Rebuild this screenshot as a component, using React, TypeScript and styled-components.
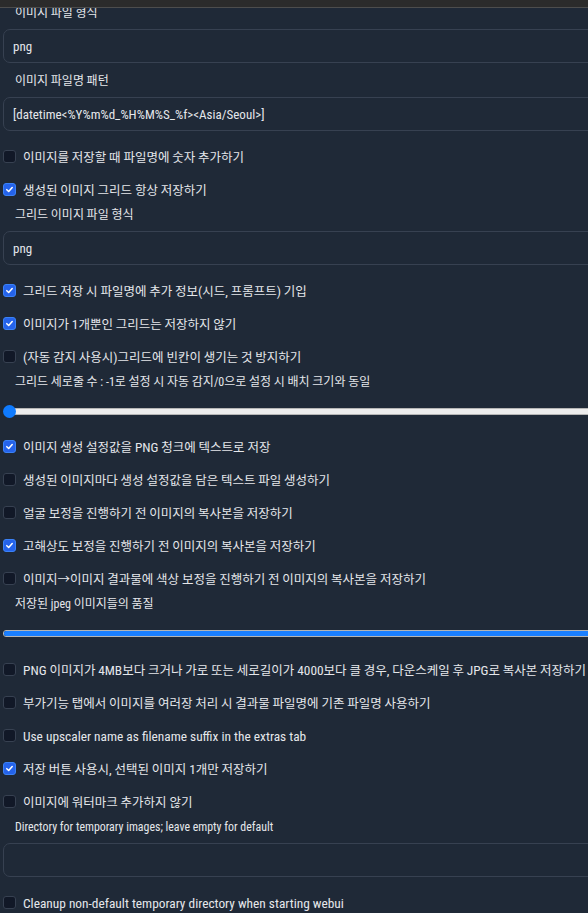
import React from "react";
import styled, { createGlobalStyle } from "styled-components";

const Global = createGlobalStyle`
  html, body { margin: 0; padding: 0; background: #1f2937; overflow: hidden; }
  body { font-family: "Noto Sans CJK KR", "Noto Sans", sans-serif; color: #e5e7eb; }
  * { box-sizing: border-box; }
`;

const Latin = styled.span<{ $scale: number }>`
  font-family: "Roboto", "Noto Sans CJK KR", sans-serif;
  font-stretch: 85%;
  font-size: ${(p) => p.$scale}em;
`;

const T = ({ text, scale = 1.07 }: { text: string; scale?: number }) => (
  <>
    {text
      .split(/([\x21-\x7e](?:[\x20-\x7e]*[\x21-\x7e])?)/)
      .map((s, i) =>
        i % 2 ? (
          <Latin key={i} $scale={scale}>
            {s}
          </Latin>
        ) : (
          <React.Fragment key={i}>{s}</React.Fragment>
        )
      )}
  </>
);

const TopBar = styled.div`
  position: fixed;
  top: 0; left: 0; right: 0;
  height: 8px;
  background: #2b2b2b;
  border-bottom: 1px solid #4d4d4d;
  z-index: 5;
`;

const Page = styled.div`
  width: 640px;
  padding: 4px 0 0 3px;
  display: flex;
  flex-direction: column;
`;

const Field = styled.div`
  display: flex;
  flex-direction: column;
  padding-bottom: 9px;
`;

const FieldLabel = styled.div<{ $mb?: number }>`
  height: 16px;
  line-height: 16px;
  padding-left: 12px;
  font-size: 12px;
  color: #e5e7eb;
  white-space: nowrap;
  margin-bottom: ${(p) => p.$mb ?? 9}px;
`;

const TextBox = styled.div`
  height: 34px;
  border: 1px solid #374151;
  border-radius: 7px;
  background: #1f2937;
  padding: 0 9px;
  display: flex;
  align-items: center;
  font-size: 12.5px;
  color: #e5e7eb;
  white-space: nowrap;
`;

const CheckRow = styled.label`
  height: 33px;
  display: flex;
  align-items: center;
  gap: 7px;
  font-size: 12.5px;
  color: #e5e7eb;
  white-space: nowrap;
`;

const Box = styled.span<{ $on: boolean }>`
  width: 13px;
  height: 13px;
  flex: none;
  border-radius: 3px;
  border: 1px solid ${(p) => (p.$on ? "#3b82f6" : "#374151")};
  background: ${(p) => (p.$on ? "#2563eb" : "#111827")};
  display: flex;
  align-items: center;
  justify-content: center;
`;

const SliderField = styled.div<{ $pb: number }>`
  display: flex;
  flex-direction: column;
  padding-bottom: ${(p) => p.$pb}px;
`;

const SliderArea = styled.div`
  position: relative;
  height: 20px;
  margin-top: 12px;
  display: flex;
  align-items: center;
`;

const Track = styled.div<{ $inset: number }>`
  position: relative;
  flex: 1;
  height: 7px;
  margin-left: ${(p) => p.$inset}px;
  border-radius: 3px;
  background: #ececec;
  border: 1px solid #b5b5b5;
  overflow: hidden;
`;

const Fill = styled.div`
  height: 100%;
  background: #1a7fff;
`;

const Thumb = styled.span`
  position: absolute;
  left: 0;
  top: 50%;
  width: 13px;
  height: 13px;
  margin-top: -6.5px;
  border-radius: 50%;
  background: #0f7bff;
`;

const Check = () => (
  <svg width="9" height="9" viewBox="0 0 10 10">
    <path d="M2 5.2 L4.1 7.2 L8 2.8" fill="none" stroke="#fff" strokeWidth="1.7" strokeLinecap="round" strokeLinejoin="round" />
  </svg>
);

const CB = ({ on, text }: { on?: boolean; text: string }) => (
  <CheckRow>
    <Box $on={!!on}>{on && <Check />}</Box>
    <span>
      <T text={text} />
    </span>
  </CheckRow>
);

const TF = ({ label, value }: { label: string; value: string }) => (
  <Field>
    <FieldLabel>
      <T text={label} scale={0.99} />
    </FieldLabel>
    <TextBox>
      <T text={value} scale={1.04} />
    </TextBox>
  </Field>
);

const Slider = ({ label, pct, thumb, pb }: { label: string; pct: number; thumb: boolean; pb: number }) => (
  <SliderField $pb={pb}>
    <FieldLabel $mb={0}>
      <T text={label} scale={1} />
    </FieldLabel>
    <SliderArea>
      <Track $inset={thumb ? 6 : 0}>
        <Fill style={{ width: `${pct}%` }} />
      </Track>
      {thumb && <Thumb />}
    </SliderArea>
  </SliderField>
);

export default function App() {
  return (
    <>
      <Global />
      <TopBar />
      <Page>
        <TF label="이미지 파일 형식" value="png" />
        <TF label="이미지 파일명 패턴" value="[datetime<%Y%m%d_%H%M%S_%f><Asia/Seoul>]" />
        <CB text="이미지를 저장할 때 파일명에 숫자 추가하기" />
        <CB on text="생성된 이미지 그리드 항상 저장하기" />
        <TF label="그리드 이미지 파일 형식" value="png" />
        <CB on text="그리드 저장 시 파일명에 추가 정보(시드, 프롬프트) 기입" />
        <CB on text="이미지가 1개뿐인 그리드는 저장하지 않기" />
        <CB text="(자동 감지 사용시)그리드에 빈칸이 생기는 것 방지하기" />
        <Slider label="그리드 세로줄 수 : -1로 설정 시 자동 감지/0으로 설정 시 배치 크기와 동일" pct={0} thumb pb={9} />
        <CB on text="이미지 생성 설정값을 PNG 청크에 텍스트로 저장" />
        <CB text="생성된 이미지마다 생성 설정값을 담은 텍스트 파일 생성하기" />
        <CB text="얼굴 보정을 진행하기 전 이미지의 복사본을 저장하기" />
        <CB on text="고해상도 보정을 진행하기 전 이미지의 복사본을 저장하기" />
        <CB text="이미지→이미지 결과물에 색상 보정을 진행하기 전 이미지의 복사본을 저장하기" />
        <Slider label="저장된 jpeg 이미지들의 품질" pct={100} thumb={false} pb={10} />
        <CB text="PNG 이미지가 4MB보다 크거나 가로 또는 세로길이가 4000보다 클 경우, 다운스케일 후 JPG로 복사본 저장하기" />
        <CB text="부가기능 탭에서 이미지를 여러장 처리 시 결과물 파일명에 기존 파일명 사용하기" />
        <CB text="Use upscaler name as filename suffix in the extras tab" />
        <CB on text="저장 버튼 사용시, 선택된 이미지 1개만 저장하기" />
        <CB text="이미지에 워터마크 추가하지 않기" />
        <TF label="Directory for temporary images; leave empty for default" value="" />
        <CB text="Cleanup non-default temporary directory when starting webui" />
      </Page>
    </>
  );
}
